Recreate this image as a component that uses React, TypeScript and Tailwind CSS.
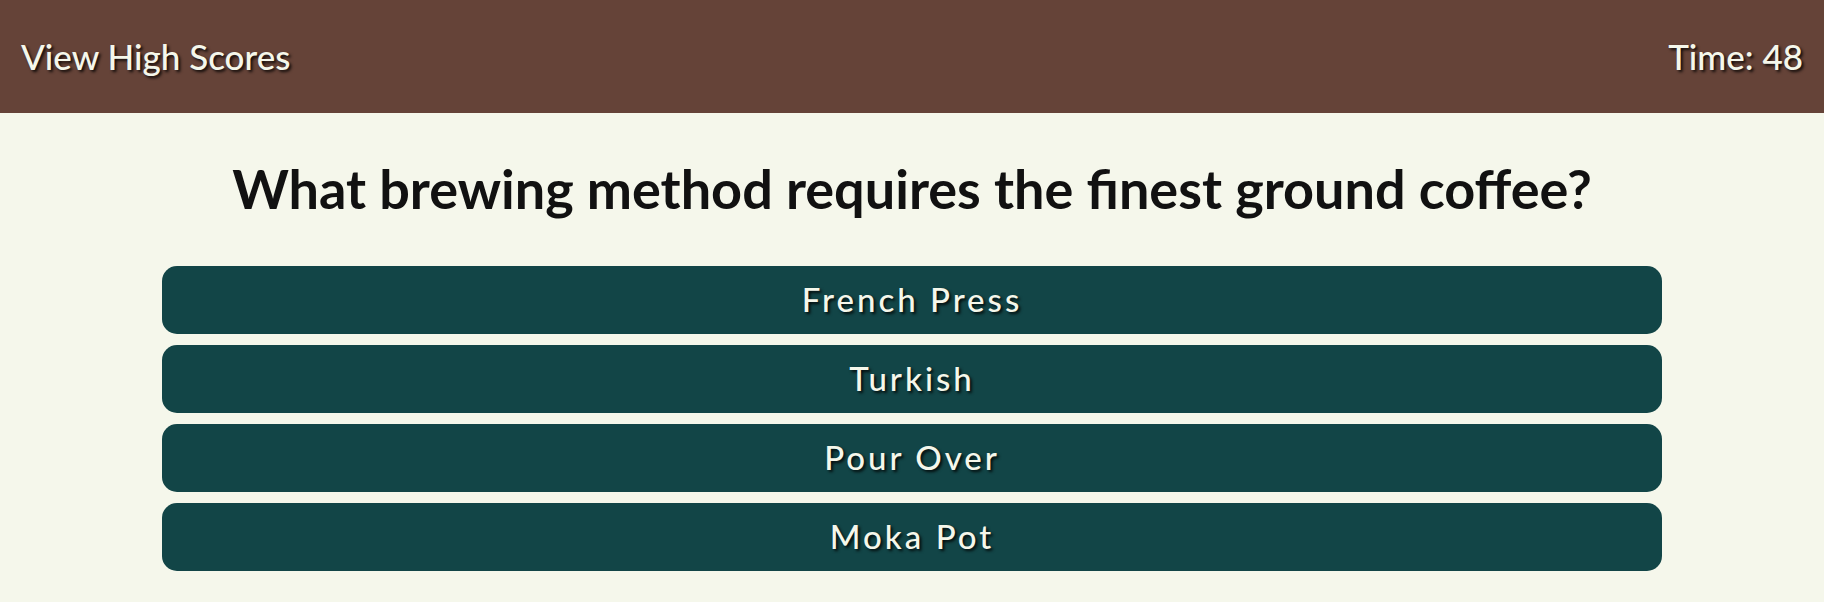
const answers = ["French Press", "Turkish", "Pour Over", "Moka Pot"];

export default function App() {
  return (
    <div className="min-h-screen bg-[#f5f7eb] font-['Lato',sans-serif]">
      <header className="flex h-[113px] items-center justify-between bg-[#654338] px-[21px] text-[35px] font-medium text-[#f5f7eb] [text-shadow:2px_2px_3px_rgba(0,0,0,0.85)]">
        <a href="#">View High Scores</a>
        <span>Time: 48</span>
      </header>
      <main className="flex flex-col items-center">
        <h1 className="mt-[36px] mb-[37px] text-[54px] font-bold leading-[80px] text-[#111111]">
          What brewing method requires the finest ground coffee?
        </h1>
        <div className="flex w-[1500px] flex-col gap-[11px]">
          {answers.map((a) => (
            <button
              key={a}
              className="h-[68px] rounded-[15px] bg-[#124547] text-[33px] font-medium tracking-[3px] text-[#f5f7eb] [text-shadow:2px_2px_3px_rgba(0,0,0,0.85)]"
            >
              {a}
            </button>
          ))}
        </div>
      </main>
    </div>
  );
}
